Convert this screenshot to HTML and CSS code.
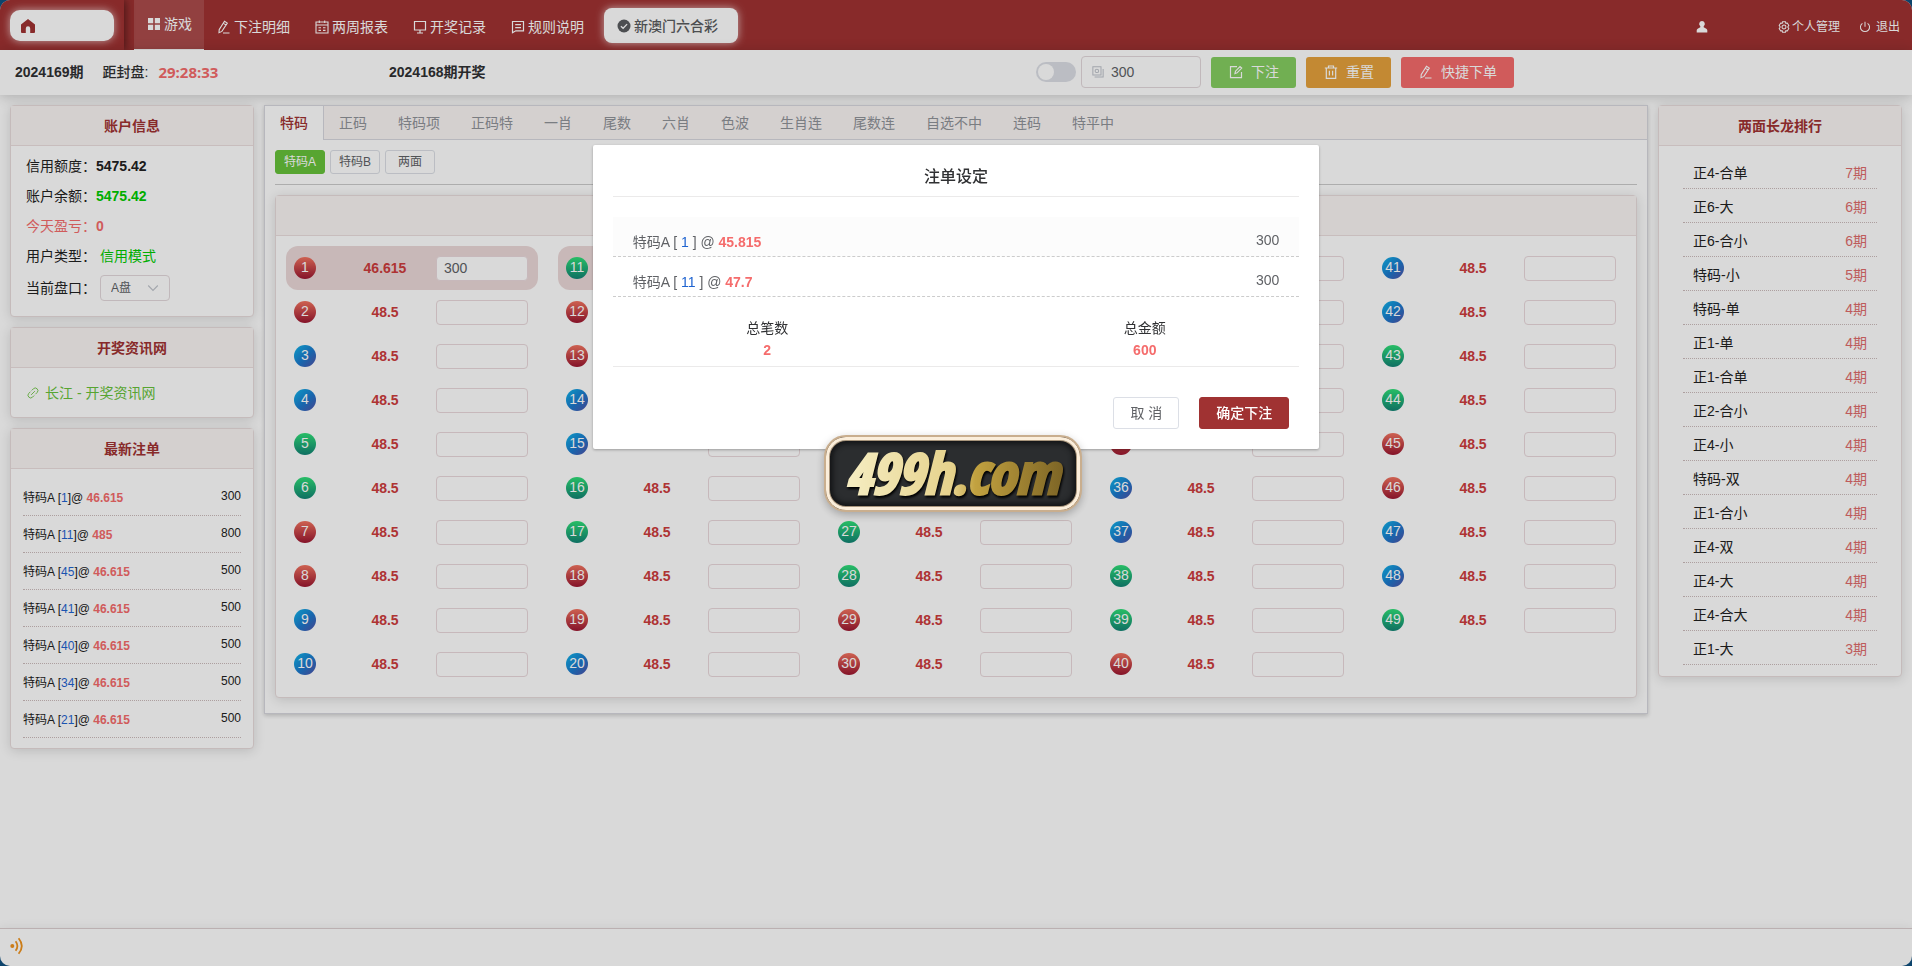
FILE: index.html
```html
<!DOCTYPE html>
<html lang="zh-CN">
<head>
<meta charset="utf-8">
<title>新澳门六合彩</title>
<link rel="stylesheet" href="styles.css">
</head>
<body>
<svg class="sprite" aria-hidden="true">
  <symbol id="i-home" viewBox="0 0 14 14"><path d="M7 0 0 5.600V13q0 1 1 1h3.800V9.500a2.200 2.200 0 0 1 4.400 0V14H13q1 0 1-1V5.600z" fill="currentColor"/></symbol>
  <symbol id="i-grid" viewBox="0 0 12 12"><path d="M0 0h5.200v5.200H0zM6.800 0H12v5.200H6.800zM0 6.800h5.200V12H0zM6.800 6.800H12V12H6.800z" fill="currentColor"/></symbol>
  <symbol id="i-pen" viewBox="0 0 14 14"><path d="M2.200 9.600 7.500 1.200l2.800 1.900-5.400 8.300L2 12.700zM6.300 3.100 9 5M6 13h6.500" fill="none" stroke="currentColor" stroke-width="1.100"/></symbol>
  <symbol id="i-cal" viewBox="0 0 14 14"><path d="M1 2h12v11H1zM1 5h12M4.300.5V3M9.700.5V3M3.500 7.700H6M8 7.700h2.500M3.500 10.400H6M8 10.400h2.500" fill="none" stroke="currentColor" stroke-width="1.100"/></symbol>
  <symbol id="i-screen" viewBox="0 0 14 14"><path d="M1.500 1.500h11v8.500h-11zM7 10v2.800M4 13h6" fill="none" stroke="currentColor" stroke-width="1.200"/></symbol>
  <symbol id="i-note" viewBox="0 0 14 14"><path d="M1.500 1.500h11v9.300H4.800l-3.300 2zM4.200 4.700h5.800M4.200 7.600h5.800" fill="none" stroke="currentColor" stroke-width="1.200"/></symbol>
  <symbol id="i-check" viewBox="0 0 14 14"><circle cx="7" cy="7" r="6.500" fill="currentColor"/><path d="m3.900 7.200 2.200 2.100 4-4.200" fill="none" stroke="#fff" stroke-width="1.300"/></symbol>
  <symbol id="i-user" viewBox="0 0 12 12"><path d="M6 0a2.900 2.900 0 0 1 1.700 5.200v1l2.600 1.500q1 .5 1 1.600V11.500H.7V9.300q0-1.100 1-1.600l2.600-1.500v-1A2.900 2.900 0 0 1 6 0z" fill="currentColor"/></symbol>
  <symbol id="i-gear" viewBox="0 0 14 14"><path d="M5.300 1h3.400l.5 1.700 1.700-.4 1.700 3L11.400 7l1.200 1.700-1.700 3-1.700-.4-.5 1.700H5.300l-.5-1.700-1.700.4-1.700-3L2.600 7 1.400 5.300l1.700-3 1.700.4z" fill="none" stroke="currentColor" stroke-width="1.200"/><circle cx="7" cy="7" r="2.300" fill="none" stroke="currentColor" stroke-width="1.200"/></symbol>
  <symbol id="i-power" viewBox="0 0 14 14"><path d="M4 2.700a5.300 5.300 0 1 0 6 0M7 .8v6" fill="none" stroke="currentColor" stroke-width="1.200"/></symbol>
  <symbol id="i-money" viewBox="0 0 14 14"><path d="M1 1h9.500v9.500H1zM3 12.800h10V3.500" fill="none" stroke="currentColor" stroke-width="1.200"/><circle cx="5.700" cy="5.700" r="2" fill="none" stroke="currentColor" stroke-width="1.200"/></symbol>
  <symbol id="i-edit" viewBox="0 0 14 14"><path d="M8 1.700H1.500v11h11V7M6 8.500l.5-2.300L11 1.500l1.700 1.600-4.600 4.700z" fill="none" stroke="currentColor" stroke-width="1.200"/></symbol>
  <symbol id="i-trash" viewBox="0 0 14 14"><path d="M.8 3h12.400M4.500 3V1h5v2M2.300 3v10.300h9.400V3M5.400 5.800v4.800M8.600 5.800v4.800" fill="none" stroke="currentColor" stroke-width="1.200"/></symbol>
  <symbol id="i-link" viewBox="0 0 14 14"><path d="m5.500 4 1.900-1.900a3 3 0 0 1 4.400 4.400L9.900 8.400M8.400 9.900l-1.900 1.900a3 3 0 0 1-4.400-4.400L4 5.500M4.800 9.200l4.400-4.400" fill="none" stroke="currentColor" stroke-width="1"/></symbol>
  <symbol id="i-down" viewBox="0 0 12 12"><path d="m1.200 3.500 4.800 5 4.800-5" fill="none" stroke="currentColor" stroke-width="1.100"/></symbol>
  <symbol id="i-wave" viewBox="0 0 14 18"><circle cx="2.300" cy="9" r="2" fill="currentColor"/><path d="M5.600 4.200q3.600 4.800 0 9.600M8.600 1.200q6.400 7.800 0 15.600" fill="none" stroke="currentColor" stroke-width="1.800"/></symbol>
</svg>

<div class="app">
  <header class="top">
    <div class="home-wrap"><a class="home" href="#" aria-label="首页"><svg class="ico"><use href="#i-home"/></svg></a></div>
    <nav class="menu">
      <a class="menu-item on" href="#"><svg class="ico"><use href="#i-grid"/></svg>游戏</a>
      <a class="menu-item" href="#"><svg class="ico"><use href="#i-pen"/></svg>下注明细</a>
      <a class="menu-item" href="#"><svg class="ico"><use href="#i-cal"/></svg>两周报表</a>
      <a class="menu-item" href="#"><svg class="ico"><use href="#i-screen"/></svg>开奖记录</a>
      <a class="menu-item" href="#"><svg class="ico"><use href="#i-note"/></svg>规则说明</a>
    </nav>
    <button class="lottery" type="button"><svg class="ico"><use href="#i-check"/></svg>新澳门六合彩</button>
    <div class="account">
      <a class="user" href="#" aria-label="用户"><svg class="ico"><use href="#i-user"/></svg></a>
      <a class="manage" href="#"><svg class="ico"><use href="#i-gear"/></svg>个人管理</a>
      <a class="quit" href="#"><svg class="ico"><use href="#i-power"/></svg>退出</a>
    </div>
  </header>

  <section class="bar">
    <div class="issue"><b>2024169期</b><span class="close">距封盘:</span><b class="timer">29:28:33</b></div>
    <div class="last">2024168期开奖</div>
    <div class="tools">
      <input class="switch" type="checkbox" aria-label="预设金额">
      <label class="amount"><svg class="ico"><use href="#i-money"/></svg><input type="text" value="300" aria-label="金额"></label>
      <button class="btn green" type="button"><svg class="ico"><use href="#i-edit"/></svg>下注</button>
      <button class="btn orange" type="button"><svg class="ico"><use href="#i-trash"/></svg>重置</button>
      <button class="btn red" type="button"><svg class="ico"><use href="#i-pen"/></svg>快捷下单</button>
    </div>
  </section>

  <main class="content">
    <aside class="side">
      <section class="card">
        <h2 class="card-head">账户信息</h2>
        <div class="info">
          <div class="info-row">信用额度：<b>5475.42</b></div>
          <div class="info-row">账户余额：<b class="lime">5475.42</b></div>
          <div class="info-row rose">今天盈亏：<b>0</b></div>
          <div class="info-row">用户类型：<span class="mode lime">信用模式</span></div>
          <div class="info-row"><label for="pan">当前盘口：</label><span class="pick"><select id="pan"><option>A盘</option></select><svg class="ico"><use href="#i-down"/></svg></span></div>
        </div>
      </section>
      <section class="card">
        <h2 class="card-head">开奖资讯网</h2>
        <div class="news"><a href="#"><svg class="ico"><use href="#i-link"/></svg>长江 - 开奖资讯网</a></div>
      </section>
      <section class="card">
        <h2 class="card-head">最新注单</h2>
        <ul class="bets" id="bets"></ul>
      </section>
    </aside>

    <section class="board">
      <nav class="tabs" id="tabs"></nav>
      <div class="board-body">
        <div class="subs">
          <button class="sub on" type="button">特码A</button>
          <button class="sub" type="button">特码B</button>
          <button class="sub" type="button">两面</button>
        </div>
        <section class="card">
          <div class="card-head"></div>
          <div class="numbers" id="numbers"></div>
        </section>
      </div>
    </section>

    <aside class="side">
      <section class="card">
        <h2 class="card-head">两面长龙排行</h2>
        <ul class="rank" id="rank"></ul>
      </section>
    </aside>
  </main>

  <footer class="foot"><svg class="ico"><use href="#i-wave"/></svg></footer>
</div>

<div class="mask">
  <div class="dialog-wrap">
    <section class="dialog" role="dialog" aria-modal="true" aria-labelledby="dlg-title">
      <h1 class="dialog-title" id="dlg-title">注单设定</h1>
      <ul class="orders">
        <li><span>特码A [ <i>1</i> ] @ <b>45.815</b></span><span class="sum">300</span></li>
        <li><span>特码A [ <i>11</i> ] @ <b>47.7</b></span><span class="sum">300</span></li>
      </ul>
      <div class="totals">
        <div class="total">总笔数<b>2</b></div>
        <div class="total">总金额<b>600</b></div>
      </div>
      <div class="actions">
        <button class="cancel" type="button">取 消</button>
        <button class="confirm" type="button">确定下注</button>
      </div>
    </section>
    <div class="brand">
      <svg class="brand-text" viewBox="0 0 240 72">
        <defs>
          <linearGradient id="gold" gradientUnits="userSpaceOnUse" x1="10" y1="0" x2="230" y2="0">
            <stop offset="0" stop-color="#f6eec4"/>
            <stop offset=".5" stop-color="#e6d28c"/>
            <stop offset=".6" stop-color="#c2a240"/>
            <stop offset=".8" stop-color="#a08332"/>
            <stop offset="1" stop-color="#7d6526"/>
          </linearGradient>
        </defs>
        <text x="119" y="57" text-anchor="middle">499h.com</text>
      </svg>
    </div>
  </div>
</div>
<script src="app.js"></script>
</body>
</html>
```

FILE: styles.css
```css
* { box-sizing: border-box; }
html { background: #10507f; }
body {
  margin: 0;
  color: #222;
  font: 14px/20px "Liberation Sans", "Noto Sans CJK SC", sans-serif;
}
ul { list-style: none; margin: 0; padding: 0; }
a { color: inherit; text-decoration: none; }
button, input, select { font: inherit; margin: 0; outline: 0; }
.sprite { display: none; }
.ico { width: 14px; height: 14px; flex: none; }

.app {
  display: flex;
  flex-direction: column;
  min-height: 100vh;
  border-radius: 10px;
  background: #fff;
  overflow: hidden;
}

/* top menu */
.top { display: flex; height: 50px; background: #a03232; color: #fff; }
.home-wrap {
  width: 124px;
  padding: 10px 10px 9px;
  border-radius: 10px 0 0 0;
  box-shadow: 2px 0 8px rgba(0, 0, 0, .45);
}
.home {
  display: flex;
  align-items: center;
  height: 31px;
  padding: 0 11px;
  border-radius: 10px;
  background: #fff;
  color: #a03232;
  box-shadow: 0 0 8px rgba(255, 255, 255, .7);
}
.menu { display: flex; margin-left: 10px; }
.menu-item { display: flex; align-items: center; gap: 3px; height: 50px; padding: 4px 12px 0 13px; }
.menu-item.on {
  gap: 4px;
  padding: 0 12px 2px 14px;
  border-bottom: 1px solid #fff;
  background: rgba(255, 255, 255, .13);
}
.menu-item.on .ico { width: 12px; height: 12px; }
.lottery {
  display: flex;
  align-items: center;
  gap: 3px;
  height: 35px;
  margin: 8px 0 0 8px;
  padding: 0 20px 0 13px;
  border: 0;
  border-radius: 8px;
  background: #fff;
  color: #5a5c60;
  font-weight: 500;
  box-shadow: 0 0 8px rgba(255, 255, 255, .7);
}
.account { display: flex; align-items: center; margin-left: auto; padding: 4px 12px 0 0; font-size: 12px; }
.account a { display: flex; align-items: center; gap: 2px; }
.account .ico { width: 12px; height: 12px; }
.user { margin-right: 70px; }
.manage { margin-right: 19px; }
.account .quit { gap: 5px; }

/* period bar */
.bar {
  display: flex;
  align-items: center;
  height: 45px;
  padding: 0 15px 1px;
  background: #fff;
  box-shadow: 0 2px 12px rgba(0, 0, 0, .2);
  color: #303133;
}
.issue { display: flex; flex: 0 0 374px; }
.close { margin: 0 10px 0 19px; font-weight: 500; }
.timer { color: #f56c6c; font-family: "Open Sans", sans-serif; font-size: 15px; font-weight: 700; }
.last { font-weight: bold; }
.tools { display: flex; align-items: center; margin: 0 383px 0 auto; }
.switch {
  appearance: none;
  width: 40px;
  height: 20px;
  margin-right: 5px;
  padding: 2px;
  border-radius: 10px;
  background: #dcdfe6;
}
.switch::before { content: ""; display: block; width: 16px; height: 16px; border-radius: 50%; background: #fff; }
.amount {
  display: flex;
  align-items: center;
  gap: 7px;
  width: 120px;
  height: 32px;
  margin-right: 10px;
  padding: 0 10px;
  border: 1px solid #e3d9dc;
  border-radius: 4px;
  color: #c0c4cc;
}
.amount .ico { width: 12px; height: 12px; }
.amount input { width: 80px; border: 0; padding: 0; background: none; color: #606266; }
.btn {
  display: flex;
  align-items: center;
  gap: 8px;
  height: 31px;
  margin-left: 10px;
  padding: 0 17px 0 18px;
  border: 0;
  border-radius: 3px;
  color: #fff;
}
.amount + .btn { margin-left: 0; }
.green { background: #85ce61; }
.orange { background: #e6a23c; }
.red { background: #f56c6c; }

/* three columns */
.content {
  display: grid;
  grid-template-columns: 244px minmax(0, 1fr) 244px;
  align-items: start;
  gap: 10px;
  flex: 1;
  padding: 10px;
}
.side { display: flex; flex-direction: column; gap: 10px; }
.card {
  border: 1px solid #e8dcdc;
  border-radius: 4px;
  background: #fff;
  box-shadow: 0 2px 12px rgba(0, 0, 0, .14);
}
.card-head {
  height: 40px;
  margin: 0;
  border-bottom: 1px solid #ecdfdf;
  background: #faf5f4;
  color: #a03232;
  font-size: 14px;
  line-height: 40px;
  text-align: center;
}
.info { padding: 5px 15px 11px; }
.info-row { display: flex; align-items: center; height: 30px; }
.info-row:last-child { height: 34px; }
.mode { margin-left: 4px; }
.lime { color: #0c0; }
.rose { color: #f56c6c; }
.pick { display: flex; align-items: center; position: relative; margin-left: 4px; }
.pick select {
  appearance: none;
  width: 70px;
  height: 26px;
  padding: 0 10px;
  border: 1px solid #e3d9dc;
  border-radius: 4px;
  background: #fff;
  color: #606266;
  font-size: 12px;
}
.pick .ico { position: absolute; right: 11px; width: 12px; height: 12px; color: #c0c4cc; }
.news { padding: 15px 16px 14px; color: #67c23a; }
.news a { display: flex; align-items: center; gap: 6px; }
.news .ico { width: 12px; height: 12px; }
.bets { padding: 10px 12px; font-size: 12px; }
.bets li {
  display: flex;
  justify-content: space-between;
  height: 37px;
  padding-top: 7px;
  border-bottom: 1px dotted #cbb;
}
.bets span:first-child { padding-top: 2px; }
.bets i, .orders i { color: #1e63d0; font-style: normal; }
.bets b, .orders b { color: #f56c6c; }
.rank { padding: 9px 24px 11px; }
.rank li {
  display: flex;
  justify-content: space-between;
  height: 34px;
  padding: 8px 10px 0;
  border-bottom: 1px dotted #cbb;
}
.rank span:last-child { color: #e06c6c; }

/* board */
.board { border: 1px solid #d8d8de; box-shadow: 0 2px 4px rgba(0, 0, 0, .15), 0 0 6px rgba(0, 0, 0, .06); }
.tabs { display: flex; height: 34px; border-bottom: 1px solid #d8d8de; background: #faf5f4; }
.tab { height: 34px; padding: 0 16px 0 15px; color: #909399; line-height: 34px; }
.tab.on { padding-right: 15px; border-right: 1px solid #d8d8de; background: #fff; color: #a03232; font-weight: 500; }
.board-body { padding: 10px 10px 15px; }
.subs { display: flex; gap: 5px; margin-bottom: 10px; padding-bottom: 10px; border-bottom: 1px solid #ccc; }
.sub {
  width: 50px;
  height: 24px;
  padding: 0;
  border: 1px solid #dcdfe6;
  border-radius: 3px;
  background: #fff;
  color: #606266;
  font-size: 12px;
}
.sub.on { border-color: #67c23a; background: #67c23a; color: #fff; }
.numbers {
  display: grid;
  grid-template-rows: repeat(10, 44px);
  grid-template-columns: repeat(5, 1fr);
  grid-auto-flow: column;
  padding: 10px 0 11px;
}
.num {
  display: grid;
  grid-template-columns: 22px 1fr 92px;
  align-items: center;
  margin: 0 10px;
  padding: 0 10px 0 8px;
  border-radius: 12px;
}
.num.on { background: #ecd9d9; }
.ball {
  height: 22px;
  border-radius: 50%;
  color: #fff;
  line-height: 21px;
  text-align: center;
}
.r { background: linear-gradient(#f27360, #9c1730); }
.b { background: linear-gradient(135deg, #10b6ea, #1c78cc 55%, #5450a6); }
.g { background: linear-gradient(#2fdf78, #128374); }
.odd { padding-left: 18px; color: #cd3c3c; font-weight: bold; text-align: center; }
.num input {
  width: 92px;
  height: 25px;
  padding: 0 7px;
  border: 1px solid #ead9dc;
  border-radius: 4px;
  background: #fff;
  color: #606266;
}

.foot {
  display: flex;
  align-items: center;
  height: 38px;
  padding: 0 10px 3px;
  border-top: 1px solid #dccfd0;
  box-shadow: 0 0 10px rgba(0, 0, 0, .08);
  color: #f0931e;
}
.foot .ico { height: 18px; }

/* order dialog */
.mask {
  position: fixed;
  inset: 0;
  background: rgba(0, 0, 0, .15);
}
.dialog-wrap { position: relative; width: 38%; margin: 15vh auto 0; }
.dialog {
  padding: 20px;
  border-radius: 2px;
  background: #fff;
  box-shadow: 0 1px 3px rgba(0, 0, 0, .3);
}
.dialog-title {
  margin: 0 0 20px;
  padding: 1px 0 8px;
  border-bottom: 1px solid #ebeaea;
  color: #303133;
  font-size: 16px;
  font-weight: 500;
  line-height: 22px;
  text-align: center;
}
.orders { color: #606266; }
.orders li {
  display: flex;
  justify-content: space-between;
  height: 40px;
  padding: 13px 20px 0;
  border-bottom: 1px dashed #ccc;
}
.orders li:first-child { background: #fcfcfc; }
.orders li > span:first-child { padding-top: 2px; }
.totals {
  display: flex;
  justify-content: space-between;
  padding: 20px 0 5px;
  border-bottom: 1px solid #ebeaea;
}
.total { width: 45%; color: #303133; line-height: 22px; text-align: center; }
.total b { display: block; color: #f56c6c; }
.actions { display: flex; justify-content: flex-end; gap: 20px; padding: 30px 10px 0; }
.actions button { height: 32px; padding: 0 16px; border: 1px solid #dcdfe6; border-radius: 3px; background: #fff; color: #606266; }
.actions .confirm { border-color: #a03232; background: #a03232; color: #fff; font-weight: 500; }

/* brand plate lying over the dialog edge */
.brand {
  position: absolute;
  top: calc(100% - 14px);
  left: 50%;
  display: flex;
  align-items: center;
  justify-content: center;
  width: 258px;
  height: 77px;
  margin-left: -132px;
  border: 2px solid #c9ae8e;
  border-radius: 22px;
  background: #2b2d2f;
  box-shadow: inset 0 0 0 3px #fbeedb, inset 0 0 0 4px #a8957c, inset 0 0 5px 7px #141517, 0 3px 8px rgba(0, 0, 0, .25);
}
.brand-text {
  width: 240px;
  height: 72px;
  overflow: visible;
  fill: url(#gold);
  stroke: url(#gold);
  stroke-width: 3px;
  filter: drop-shadow(1px 2px 1px #000);
  font: italic bold 56px "Open Sans Condensed", "Roboto Condensed", "Liberation Sans Narrow", sans-serif;
}
```

FILE: app.js
```js
const el = (id, html) => { document.getElementById(id).innerHTML = html; };

el('tabs', '特码,正码,特码项,正码特,一肖,尾数,六肖,色波,生肖连,尾数连,自选不中,连码,特平中'.split(',')
  .map((t, i) => `<a class="tab${i ? '' : ' on'}" href="#">${t}</a>`).join(''));

el('bets', [[1, '46.615', 300], [11, '485', 800], [45, '46.615', 500], [41, '46.615', 500],
  [40, '46.615', 500], [34, '46.615', 500], [21, '46.615', 500]]
  .map(([n, o, m]) => `<li><span>特码A [<i>${n}</i>]@ <b>${o}</b></span><span>${m}</span></li>`).join(''));

el('rank', [['正4-合单', 7], ['正6-大', 6], ['正6-合小', 6], ['特码-小', 5], ['特码-单', 4],
  ['正1-单', 4], ['正1-合单', 4], ['正2-合小', 4], ['正4-小', 4], ['特码-双', 4],
  ['正1-合小', 4], ['正4-双', 4], ['正4-大', 4], ['正4-合大', 4], ['正1-大', 3]]
  .map(([t, n]) => `<li><span>${t}</span><span>${n}期</span></li>`).join(''));

const colours = 'rrbbggrrbbgrrbbggrrbggrrbbggrrbggrrbbggrbbggrrbbg';
const chosen = { 1: '46.615', 11: '46.615' };
el('numbers', [...colours].map((c, i) => {
  const n = i + 1;
  const on = n in chosen;
  return `<div class="num${on ? ' on' : ''}"><span class="ball ${c}">${n}</span>` +
    `<span class="odd">${chosen[n] || '48.5'}</span>` +
    `<input type="text" aria-label="${n}" value="${on ? 300 : ''}"></div>`;
}).join(''));
```
